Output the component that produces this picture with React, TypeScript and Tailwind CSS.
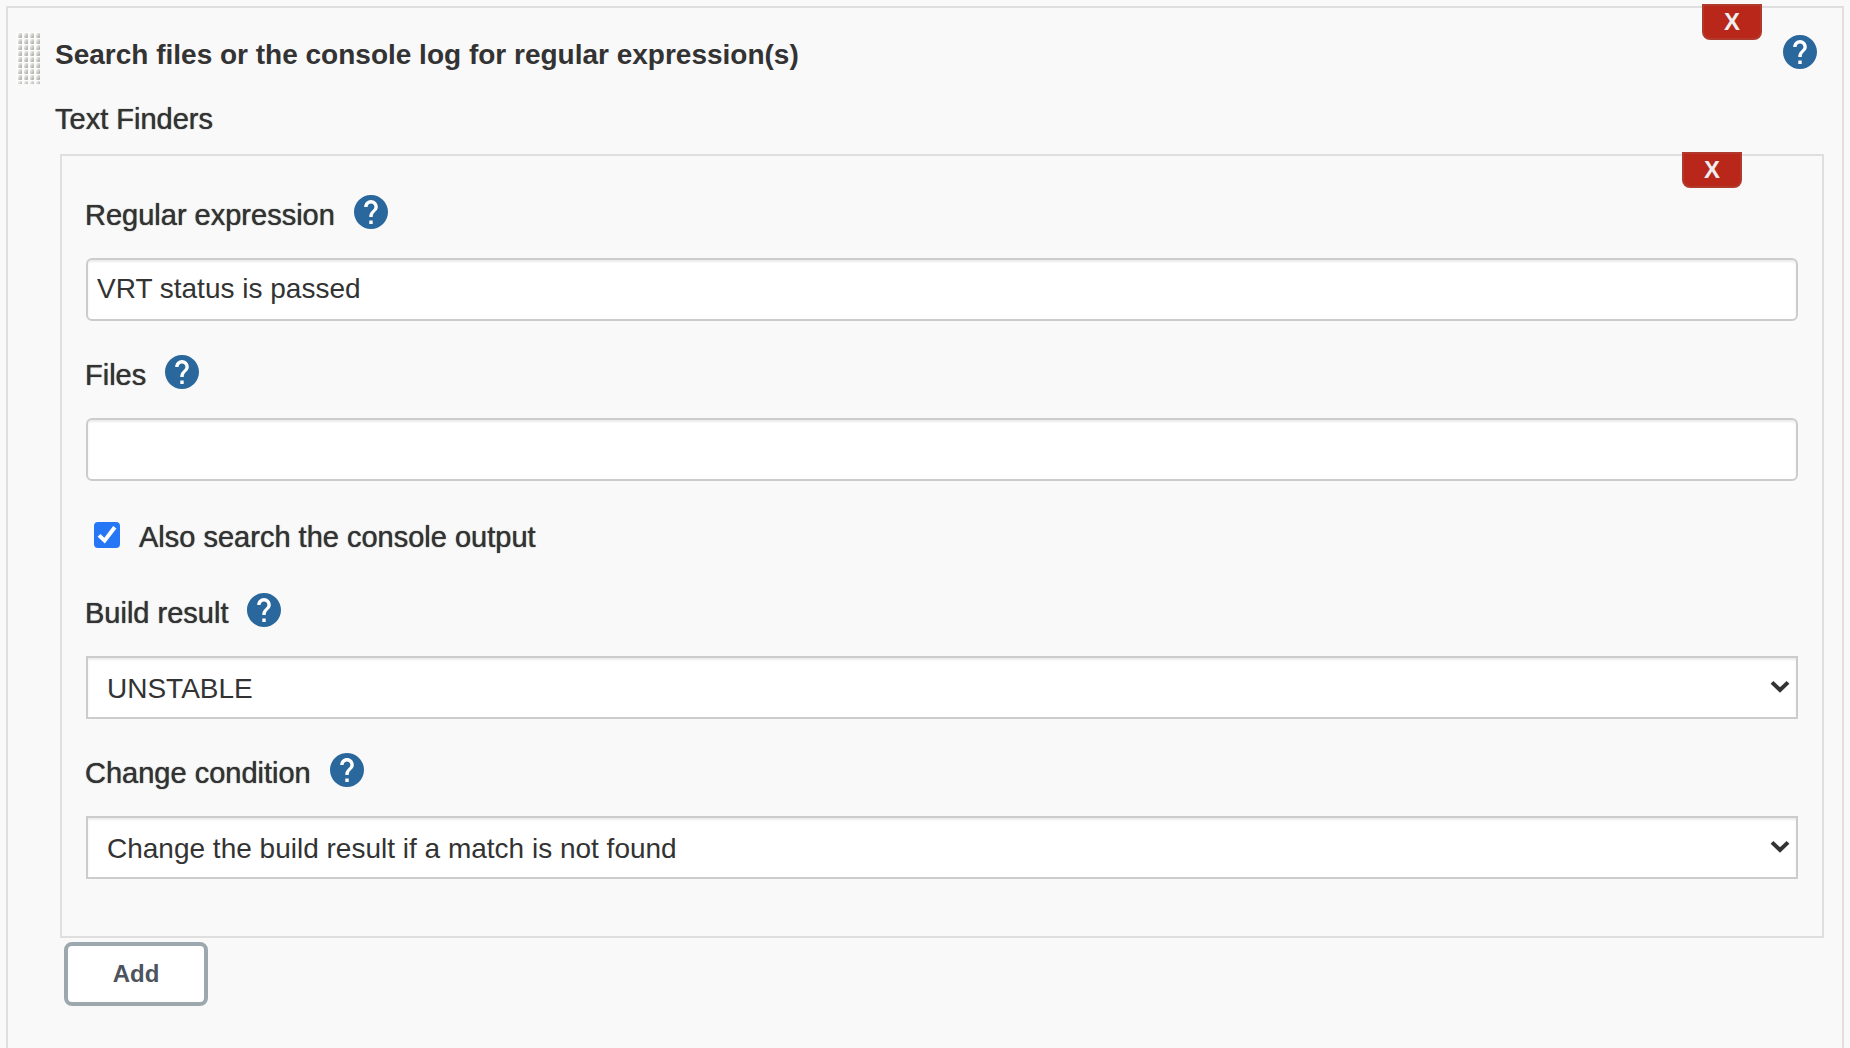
import React, { useId, useState } from "react";

function HelpButton({ topic }: { topic: string }) {
  return (
    <button
      type="button"
      aria-label={`Help for feature: ${topic}`}
      className="block size-[34px] shrink-0 rounded-full text-[#29679c]"
    >
      <svg viewBox="2 2 20 20" className="size-full" fill="currentColor" aria-hidden="true">
        <circle cx="12" cy="12" r="9" fill="#fff" />
        <path d="M12 2C6.48 2 2 6.48 2 12s4.48 10 10 10 10-4.48 10-10S17.52 2 12 2zm1 17h-2v-2h2v2zm2.07-7.75l-.9.92C13.45 12.9 13 13.5 13 15h-2v-.5c0-1.1.45-2.1 1.17-2.83l1.24-1.26c.37-.36.59-.86.59-1.41 0-1.1-.9-2-2-2s-2 .9-2 2H8c0-2.21 1.79-4 4-4s4 1.79 4 4c0 .88-.36 1.68-.93 2.25z" />
      </svg>
    </button>
  );
}

function DeleteButton({ label }: { label: string }) {
  return (
    <button
      type="button"
      aria-label={label}
      className="absolute -top-1 right-20 flex h-9 w-[60px] items-center justify-center rounded-b-lg border-2 border-[#b03a2e] bg-[#b9261a] text-2xl font-bold text-[#eeeeee]"
    >
      X
    </button>
  );
}

function DragHandle() {
  return (
    <svg className="h-[52px] w-6 shrink-0 cursor-move" aria-hidden="true">
      <defs>
        <linearGradient id="grip-dot" x1="0" y1="0" x2="1" y2="1">
          <stop offset="0.1" stopColor="#f4f4f2" />
          <stop offset="0.9" stopColor="#a9a9a4" />
        </linearGradient>
        <pattern id="grip" width="6" height="6" patternUnits="userSpaceOnUse">
          <rect width="6" height="6" fill="#fcfcfc" />
          <rect x="2" y="1" width="4" height="5" rx="1" fill="url(#grip-dot)" />
        </pattern>
      </defs>
      <rect width="24" height="52" fill="url(#grip)" />
    </svg>
  );
}

function Field({
  label,
  children,
}: {
  label: string;
  children: (id: string) => React.ReactNode;
}) {
  const id = useId();
  return (
    <div>
      <div className="flex items-center gap-[19px]">
        <label
          htmlFor={id}
          className="pt-1.5 text-[29px] leading-7 font-medium [text-shadow:0_0_1px_#333333]"
        >
          {label}
        </label>
        <HelpButton topic={label} />
      </div>
      <div className="mt-[29px] px-px">{children(id)}</div>
    </div>
  );
}

function TextInput({ id, initial }: { id: string; initial: string }) {
  const [value, setValue] = useState(initial);
  return (
    <input
      id={id}
      type="text"
      value={value}
      onChange={(e) => setValue(e.target.value)}
      className="block h-[63px] w-full rounded-md border-2 border-[#cccccc] bg-white px-[9px] pb-0.5 shadow-[inset_0_2px_2px_rgba(0,0,0,0.075)]"
    />
  );
}

function Select({ id, options, initial }: { id: string; options: string[]; initial: string }) {
  const [value, setValue] = useState(initial);
  return (
    <div className="relative">
      <select
        id={id}
        value={value}
        onChange={(e) => setValue(e.target.value)}
        className="block h-[63px] w-full appearance-none border-2 border-[#cccccc] bg-white pt-0.5 pr-12 pl-[19px] shadow-[inset_0_2px_2px_rgba(0,0,0,0.075)]"
      >
        {options.map((o) => (
          <option key={o}>{o}</option>
        ))}
      </select>
      <svg
        viewBox="0 0 20 14"
        className="pointer-events-none absolute top-6 right-2 h-3.5 w-5"
        fill="none"
        stroke="#333333"
        strokeWidth="4"
        aria-hidden="true"
      >
        <path d="M2 2.4l8 7.6 8-7.6" />
      </svg>
    </div>
  );
}

function Checkbox({ label }: { label: string }) {
  const [checked, setChecked] = useState(true);
  const id = useId();
  return (
    <div className="flex items-start pl-[9px]">
      <span className="relative mr-[19px] size-[26px] shrink-0">
        <input
          id={id}
          type="checkbox"
          checked={checked}
          onChange={(e) => setChecked(e.target.checked)}
          className="block size-full appearance-none rounded border-2 border-[#767676] bg-white checked:border-[#2677f6] checked:bg-[#2677f6]"
        />
        {checked && (
          <svg
            viewBox="0 0 26 26"
            className="pointer-events-none absolute inset-0 size-full"
            fill="none"
            stroke="#fff"
            strokeWidth="4"
            aria-hidden="true"
          >
            <path d="M5 13.4l5.6 5.2L20.8 5.2" />
          </svg>
        )}
      </span>
      <label
        htmlFor={id}
        className="text-[29px] leading-[30px] font-medium [text-shadow:0_0_1px_#333333]"
      >
        {label}
      </label>
    </div>
  );
}

export default function App() {
  return (
    <main className="flex min-h-screen flex-col bg-[#f9f9f9] px-1.5 pt-1.5 font-['Liberation_Sans',Arial,sans-serif] text-[28px] leading-8 text-[#333333]">
      <section className="relative grow border-2 border-b-0 border-[#dfdfdf] pt-6">
        <DeleteButton label="Delete build step" />
        <header className="flex items-start pr-[25px] pl-2">
          <DragHandle />
          <h2 className="ml-[15px] grow pt-[7px] font-bold">
            Search files or the console log for regular expression(s)
          </h2>
          <div className="pt-[3px]">
            <HelpButton topic="Search files or the console log" />
          </div>
        </header>

        <h3 className="mt-[19px] ml-[47px] text-[29px] leading-8 font-medium [text-shadow:0_0_1px_#333333]">
          Text Finders
        </h3>

        <div className="relative mt-[19px] mr-[18px] ml-[52px] border-2 border-[#dfdfdf] px-[23px] pt-[39px] pb-[57px]">
          <DeleteButton label="Delete text finder" />
          <div className="flex flex-col gap-[34px]">
            <Field label="Regular expression">
              {(id) => <TextInput id={id} initial="VRT status is passed" />}
            </Field>
            <Field label="Files">{(id) => <TextInput id={id} initial="" />}</Field>
          </div>
          <div className="my-[41px]">
            <Checkbox label="Also search the console output" />
          </div>
          <div className="flex flex-col gap-[34px]">
            <Field label="Build result">
              {(id) => (
                <Select
                  id={id}
                  options={["SUCCESS", "UNSTABLE", "FAILURE", "NOT_BUILT", "ABORTED"]}
                  initial="UNSTABLE"
                />
              )}
            </Field>
            <Field label="Change condition">
              {(id) => (
                <Select
                  id={id}
                  options={[
                    "Change the build result if a match is found",
                    "Change the build result if a match is not found",
                  ]}
                  initial="Change the build result if a match is not found"
                />
              )}
            </Field>
          </div>
        </div>

        <button
          type="button"
          className="mt-1 ml-14 block h-16 w-36 rounded-lg border-4 border-[#9da8ae] bg-white text-2xl font-bold text-[#4d545d]"
        >
          Add
        </button>
      </section>
    </main>
  );
}
